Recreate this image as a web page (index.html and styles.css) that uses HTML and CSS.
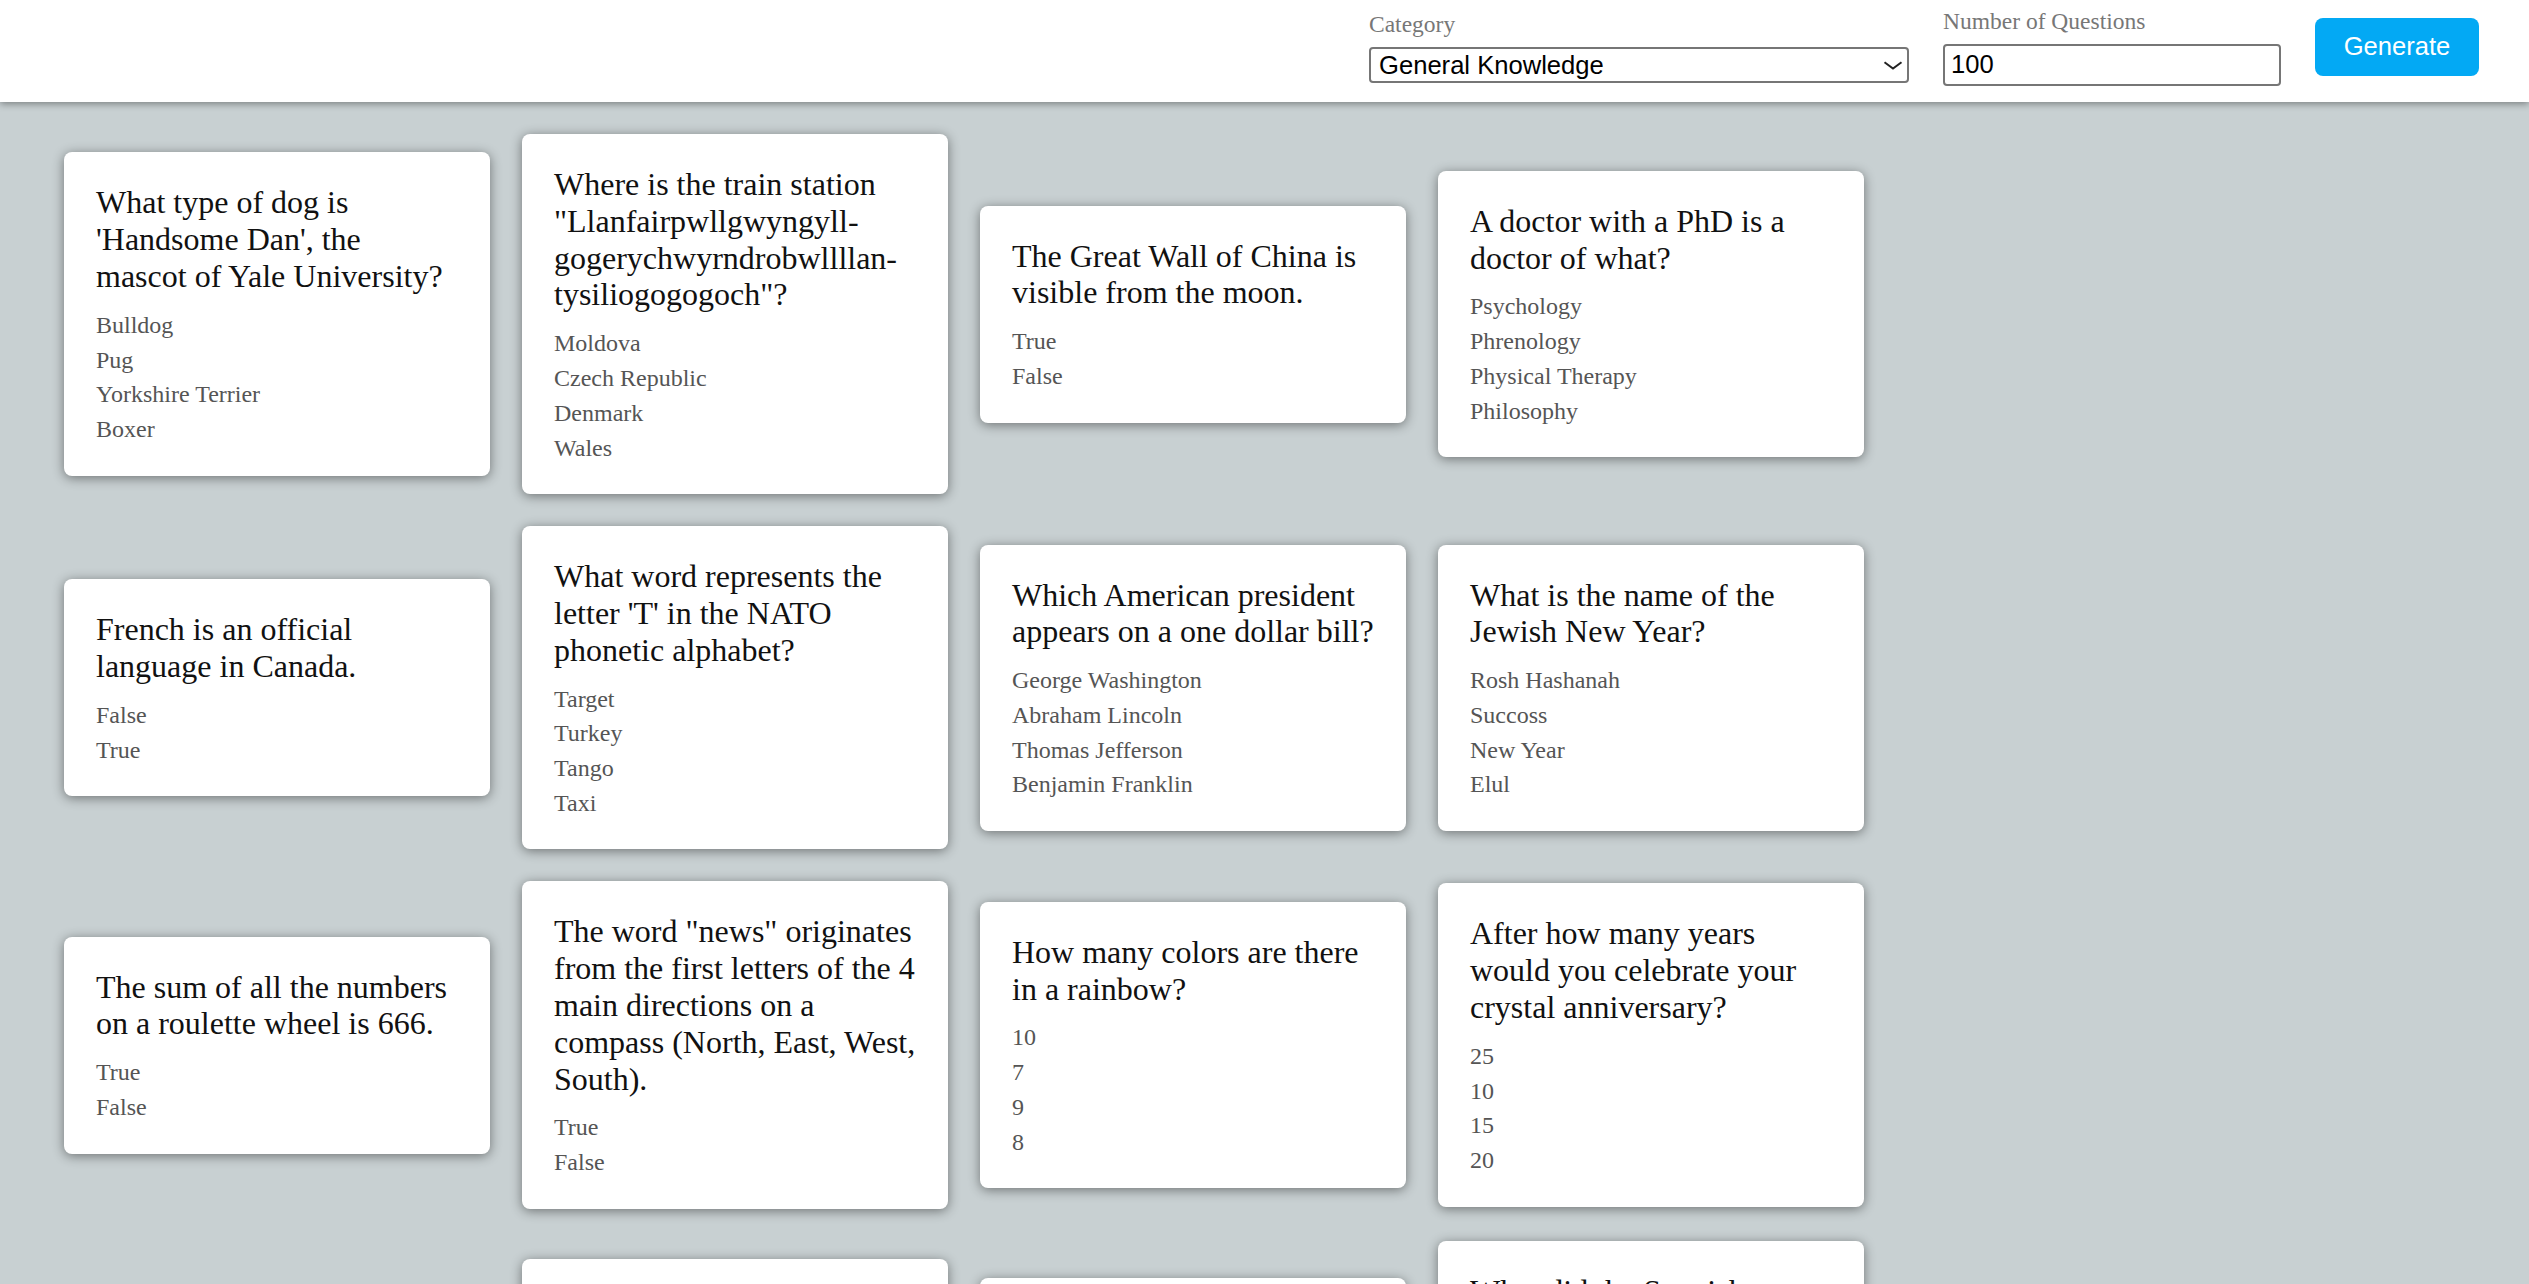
FILE: index.html
```html
<!DOCTYPE html>
<html lang="en">
<head>
<meta charset="utf-8">
<title>Trivia</title>
<link rel="stylesheet" href="styles.css">
</head>
<body>
<header class="topbar">
  <div class="field field-category">
    <label class="field-label" for="cat">Category</label>
    <div class="select-wrap">
      <select id="cat" class="select">
        <option>General Knowledge</option>
      </select>
      <svg class="chevron" width="20" height="9" viewBox="0 0 20 9"><path d="M1.5 1.2 L10 7.6 L18.5 1.2" fill="none" stroke="#222" stroke-width="2"/></svg>
    </div>
  </div>
  <div class="field field-number">
    <label class="field-label" for="num">Number of Questions</label>
    <input id="num" class="input" type="text" value="100">
  </div>
  <button class="btn">Generate</button>
</header>

<main class="grid">
  <article class="card">
    <h2 class="q">What type of dog is 'Handsome Dan', the mascot of Yale University?</h2>
    <ul class="answers"><li>Bulldog</li><li>Pug</li><li>Yorkshire Terrier</li><li>Boxer</li></ul>
  </article>
  <article class="card">
    <h2 class="q">Where is the train station "Llanfairpwllgwyngyll-gogerychwyrndrobwllllan-tysiliogogogoch"?</h2>
    <ul class="answers"><li>Moldova</li><li>Czech Republic</li><li>Denmark</li><li>Wales</li></ul>
  </article>
  <article class="card">
    <h2 class="q">The Great Wall of China is visible from the moon.</h2>
    <ul class="answers"><li>True</li><li>False</li></ul>
  </article>
  <article class="card">
    <h2 class="q">A doctor with a PhD is a doctor of what?</h2>
    <ul class="answers"><li>Psychology</li><li>Phrenology</li><li>Physical Therapy</li><li>Philosophy</li></ul>
  </article>

  <article class="card">
    <h2 class="q">French is an official language in Canada.</h2>
    <ul class="answers"><li>False</li><li>True</li></ul>
  </article>
  <article class="card">
    <h2 class="q">What word represents the letter 'T' in the NATO phonetic alphabet?</h2>
    <ul class="answers"><li>Target</li><li>Turkey</li><li>Tango</li><li>Taxi</li></ul>
  </article>
  <article class="card">
    <h2 class="q">Which American president appears on a one dollar bill?</h2>
    <ul class="answers"><li>George Washington</li><li>Abraham Lincoln</li><li>Thomas Jefferson</li><li>Benjamin Franklin</li></ul>
  </article>
  <article class="card">
    <h2 class="q">What is the name of the Jewish New Year?</h2>
    <ul class="answers"><li>Rosh Hashanah</li><li>Succoss</li><li>New Year</li><li>Elul</li></ul>
  </article>

  <article class="card">
    <h2 class="q">The sum of all the numbers on a roulette wheel is 666.</h2>
    <ul class="answers"><li>True</li><li>False</li></ul>
  </article>
  <article class="card">
    <h2 class="q">The word "news" originates from the first letters of the 4 main directions on a compass (North, East, West, South).</h2>
    <ul class="answers"><li>True</li><li>False</li></ul>
  </article>
  <article class="card">
    <h2 class="q">How many colors are there in a rainbow?</h2>
    <ul class="answers"><li>10</li><li>7</li><li>9</li><li>8</li></ul>
  </article>
  <article class="card">
    <h2 class="q">After how many years would you celebrate your crystal anniversary?</h2>
    <ul class="answers"><li>25</li><li>10</li><li>15</li><li>20</li></ul>
  </article>

  <article class="card">
    <h2 class="q">Linus Torvalds created Linux and Git.</h2>
    <ul class="answers"><li>True</li><li>False</li></ul>
  </article>
  <article class="card">
    <h2 class="q">Which of the following is the IATA code for Manchester Airport?</h2>
    <ul class="answers"><li>MAN</li><li>EGLL</li><li>LHR</li><li>EGCC</li></ul>
  </article>
  <article class="card">
    <h2 class="q">What is the Zodiac symbol for Gemini?</h2>
    <ul class="answers"><li>Twins</li><li>Fish</li><li>Scales</li><li>Maiden</li></ul>
  </article>
  <article class="card">
    <h2 class="q">What did the Spanish autonomous community of Catalonia ban in 2010, that took effect in 2012?</h2>
    <ul class="answers"><li>Bullfighting</li><li>Fiestas</li><li>Flamenco</li><li>Mariachi</li></ul>
  </article>
</main>
</body>
</html>
```

FILE: styles.css
```css
* { box-sizing: border-box; }

html, body {
  margin: 0;
  padding: 0;
}

body {
  background: #c8d0d2;
  font-family: "Liberation Serif", "Times New Roman", serif;
  min-height: 100vh;
}

.topbar {
  position: relative;
  z-index: 2;
  height: 102px;
  padding: 0 50px 9px 0;
  background: #ffffff;
  box-shadow: 0 2px 7px rgba(0, 0, 0, 0.38);
  display: flex;
  justify-content: flex-end;
  align-items: center;
  gap: 34px;
}

.field {
  display: flex;
  flex-direction: column;
}

.field-label {
  display: block;
  font-family: "Liberation Serif", "Times New Roman", serif;
  font-size: 23.5px;
  line-height: 27px;
  color: #777777;
  margin-bottom: 9px;
}

.field-number .field-label {
  margin-bottom: 9px;
}

.select-wrap {
  position: relative;
  width: 540px;
}

.select {
  appearance: none;
  -webkit-appearance: none;
  display: block;
  width: 540px;
  height: 36px;
  margin: 0;
  padding: 0 34px 0 8px;
  border: 2px solid #767676;
  border-radius: 4px;
  background: #ffffff;
  color: #000000;
  font-family: "Liberation Sans", Arial, sans-serif;
  font-size: 25.6px;
  line-height: 32px;
}

.chevron {
  position: absolute;
  right: 6px;
  top: 14px;
  pointer-events: none;
}

.input {
  display: block;
  width: 338px;
  height: 42px;
  margin: 0;
  padding: 0 6px;
  border: 2px solid #767676;
  border-radius: 4px;
  background: #ffffff;
  color: #000000;
  font-family: "Liberation Sans", Arial, sans-serif;
  font-size: 25.6px;
}

.btn {
  width: 164px;
  height: 58px;
  margin: 0;
  border: none;
  border-radius: 8px;
  background: #03a9f4;
  color: #ffffff;
  font-family: "Liberation Sans", Arial, sans-serif;
  font-size: 25.6px;
  padding: 0;
}

.grid {
  display: grid;
  grid-template-columns: repeat(4, 426px);
  column-gap: 32px;
  row-gap: 32px;
  align-items: center;
  padding: 32px 64px;
}

.card {
  background: #ffffff;
  border-radius: 8px;
  padding: 32px;
  box-shadow: 0 2px 12px rgba(0, 0, 0, 0.45);
}

.q {
  margin: 0 0 17px;
  font-family: "Liberation Serif", "Times New Roman", serif;
  font-weight: normal;
  font-size: 32px;
  line-height: 36.8px;
  color: #111111;
}

.answers {
  list-style: none;
  margin: 0;
  padding: 0;
  display: flex;
  flex-direction: column;
  gap: 7.2px;
}

.answers li {
  font-family: "Liberation Serif", "Times New Roman", serif;
  font-size: 24px;
  line-height: 27.6px;
  color: #555555;
}
```
